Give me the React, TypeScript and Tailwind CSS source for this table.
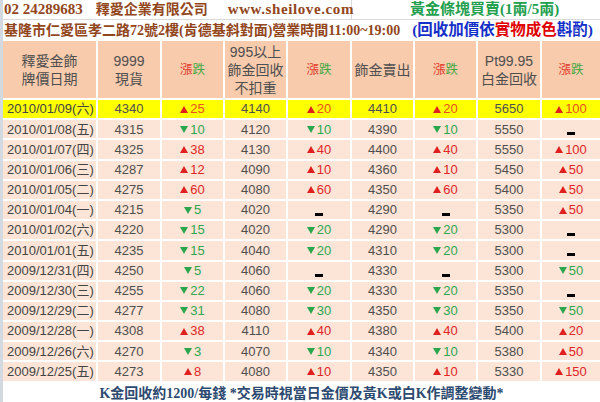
const rows = [
  ["2010/01/09(六)", "4340", "u25", "4140", "u20", "4410", "u20", "5650", "u100"],
  ["2010/01/08(五)", "4315", "d10", "4120", "d10", "4390", "d10", "5550", "-"],
  ["2010/01/07(四)", "4325", "u38", "4130", "u40", "4400", "u40", "5550", "u100"],
  ["2010/01/06(三)", "4287", "u12", "4090", "u10", "4360", "u10", "5450", "u50"],
  ["2010/01/05(二)", "4275", "u60", "4080", "u60", "4350", "u60", "5400", "u50"],
  ["2010/01/04(一)", "4215", "d5", "4020", "-", "4290", "-", "5350", "u50"],
  ["2010/01/02(六)", "4220", "d15", "4020", "d20", "4290", "d20", "5300", "-"],
  ["2010/01/01(五)", "4235", "d15", "4040", "d20", "4310", "d20", "5300", "-"],
  ["2009/12/31(四)", "4250", "d5", "4060", "-", "4330", "-", "5300", "d50"],
  ["2009/12/30(三)", "4255", "d22", "4060", "d20", "4330", "d20", "5350", "-"],
  ["2009/12/29(二)", "4277", "d31", "4080", "d30", "4350", "d30", "5350", "d50"],
  ["2009/12/28(一)", "4308", "u38", "4110", "u40", "4380", "u40", "5400", "u20"],
  ["2009/12/26(六)", "4270", "d3", "4070", "d10", "4340", "d10", "5380", "u50"],
  ["2009/12/25(五)", "4273", "u8", "4080", "u10", "4350", "u10", "5330", "u150"],
]

function Tri({ up }: { up: boolean }) {
  return up ? (
    <svg width="8" height="7" viewBox="0 0 8 7"><path d="M4 0L8 7H0z" fill="#e01f1f" /></svg>
  ) : (
    <svg width="8" height="7" viewBox="0 0 8 7"><path d="M0 0H8L4 7z" fill="#2aa64d" /></svg>
  )
}

function Change({ value, hot }: { value: string; hot?: boolean }) {
  if (value === "-") return <span className="inline-block w-[8px] h-[3px] bg-black mt-[9px]" />
  const up = value[0] === "u"
  const color = up ? (hot ? "text-[#e9521e]" : "text-[#e02626]") : "text-[#2ea850]"
  return <span className={`flex items-center gap-[2px] ${color}`}><Tri up={up} />{value.slice(1)}</span>
}

function UpDown() {
  return <span className="text-[12.5px]"><span className="text-[#e03a2a]">漲</span><span className="text-[#3fa83f]">跌</span></span>
}

function Head({ children }: { children: React.ReactNode }) {
  return <div className="bg-[#f8cbad] flex flex-col items-center justify-center text-[14px] leading-[18px] text-[#4f4f4f]">{children}</div>
}

export default function App() {
  const serif = "font-['Liberation_Serif','Noto_Sans_CJK_TC',serif]"
  return <div className="w-[600px] h-[402px] bg-white border-l-[3px] border-[#d3d9e1] overflow-hidden font-['Liberation_Sans','Noto_Sans_CJK_TC',sans-serif]">
    <div className={`flex h-[20px] border-b border-[#dadada] ${serif} font-bold text-[15px] whitespace-nowrap`}>
      <div className="w-[349px] border-r border-[#dadada] pl-[1px] flex items-center text-[#92461c]">
        <span>02 24289683</span>
        <span className="ml-[13px] text-[14px]">釋愛企業有限公司</span>
        <span className="ml-[20px] tracking-[0.6px]">www.sheilove.com</span>
      </div>
      <div className="flex-1 pl-[58px] flex items-center text-[#23a04e] font-semibold">黃金條塊買賣(1兩/5兩)</div>
    </div>
    <div className={`flex items-center h-[20px] ${serif} font-bold whitespace-nowrap`}>
      <span className="pl-[1px] text-[14px] text-[#92461c]">基隆市仁愛區孝二路72號2樓(肯德基斜對面)營業時間11:00~19:00</span>
      <span className="ml-[12px] text-[15.5px] text-[#1530c8]">(回收加價依<span className="text-[#e00000]">實物成色</span>斟酌)</span>
    </div>
    <div className="mt-[1px] grid grid-cols-[93px_62px_61px_61px_62px_61px_61px_62px_58px] grid-rows-[57px] auto-rows-[18.2px] gap-[2px]">
      <Head><span>釋愛金飾</span><span>牌價日期</span></Head>
      <Head><span>9999</span><span>現貨</span></Head>
      <Head><UpDown /></Head>
      <Head><span>995以上</span><span>飾金回收</span><span>不扣重</span></Head>
      <Head><UpDown /></Head>
      <Head><span>飾金賣出</span></Head>
      <Head><UpDown /></Head>
      <Head><span>Pt99.95</span><span>白金回收</span></Head>
      <Head><UpDown /></Head>
      {rows.map((row, i) => {
        const bg = i === 0 ? "bg-[#ffff00]" : "bg-[#fce4d6]"
        return row.map((cell, j) => {
          if (j === 0) return <div key={i + "-" + j} className={`${bg} flex items-center pl-[4px] text-[13px] text-[#444]`}>{cell}</div>
          if (j % 2 === 0) return <div key={i + "-" + j} className={`${bg} flex items-center justify-center text-[13px]`}><Change value={cell} hot={i === 0} /></div>
          return <div key={i + "-" + j} className={`${bg} flex items-center justify-center text-[13px] text-[#4f4f4f]`}>{cell}</div>
        })
      })}
    </div>
    <div className={`pt-[5px] h-[21px] flex items-center justify-center ${serif} font-bold text-[14px] text-[#2d4a70] whitespace-nowrap`}>
      K金回收約1200/每錢 *交易時視當日金價及黃K或白K作調整變動*
    </div>
  </div>
}
